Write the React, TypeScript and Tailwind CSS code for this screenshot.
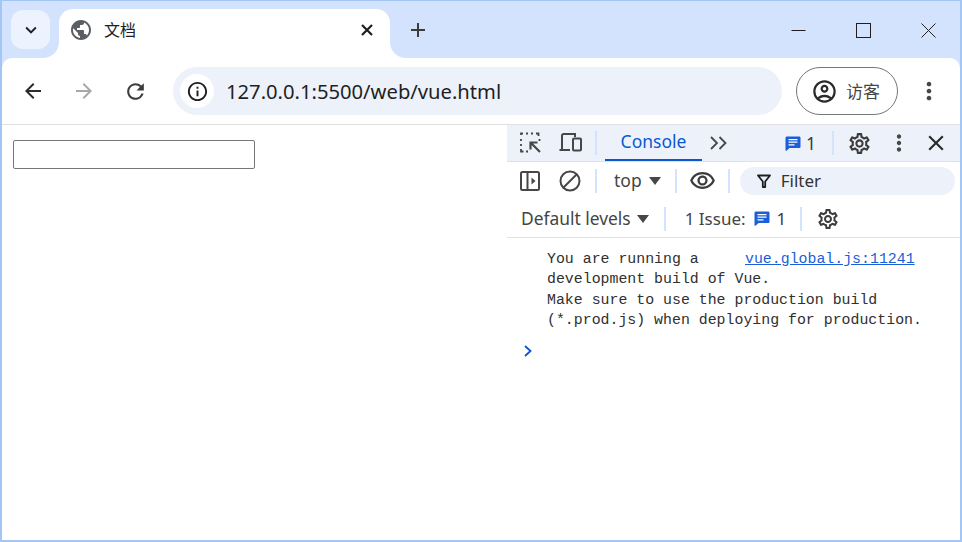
import React from "react";
import { MdArrowBack, MdArrowForward, MdRefresh, MdInfoOutline, MdOutlineAccountCircle, MdMoreVert, MdClose, MdAdd, MdKeyboardArrowDown, MdPublic, MdOutlineSettings, MdOutlineRemoveRedEye } from "react-icons/md";

const ui = "font-['Noto_Sans','Noto_Sans_CJK_SC',sans-serif]";

function Sep({ h = "h-[24px]" }: { h?: string }) {
  return <div className={`w-[2px] ${h} bg-[#d3e3fd] shrink-0`} />;
}

function Inspect() {
  return (
    <svg width="22" height="22" viewBox="0 0 22 22" fill="none" stroke="#474747" strokeWidth="2">
      <path d="M1 3V1.5H3M6 1.5h2M11 1.5h2M16 1.5h2.5V4M19.5 7v2M1 7v2M1 12v2M1 17v2.5H3.5M6 19.5h2" strokeWidth="1.8" />
      <path d="M20 20 L11 11 M10.5 17.5 V10.5 H17.5" strokeWidth="2.2" />
    </svg>
  );
}

function Device() {
  return (
    <svg width="24" height="22" viewBox="0 0 24 22" fill="none" stroke="#474747" strokeWidth="2">
      <path d="M3 17V3.5C3 2.7 3.7 2 4.5 2H16V5" />
      <path d="M0.5 18H11" />
      <rect x="14" y="6.5" width="8" height="12" rx="1" />
    </svg>
  );
}

function Dock() {
  return (
    <svg width="20" height="20" viewBox="0 0 20 20" fill="none" stroke="#474747" strokeWidth="2">
      <rect x="1" y="1" width="18" height="18" rx="1.5" />
      <path d="M7.5 1v18" />
      <path d="M11.5 6.5 L15.5 10 L11.5 13.5Z" fill="#474747" stroke="none" />
    </svg>
  );
}

function Block() {
  return (
    <svg width="22" height="22" viewBox="0 0 22 22" fill="none" stroke="#474747" strokeWidth="2">
      <circle cx="11" cy="11" r="9.5" />
      <path d="M4.5 17.5 L17.5 4.5" />
    </svg>
  );
}

function Funnel() {
  return (
    <svg width="14" height="14" viewBox="0 0 14 14" fill="none" stroke="#1f1f1f" strokeWidth="1.8">
      <path d="M1 1.5H13L8.2 7.5V13H5.8V7.5Z" strokeLinejoin="round" />
    </svg>
  );
}

function Caret() {
  return <span className="w-0 h-0 border-x-[6px] border-x-transparent border-t-[8px] border-t-[#474747]" />;
}

function Chevrons() {
  return (
    <svg width="18" height="14" viewBox="0 0 18 14" fill="none" stroke="#474747" strokeWidth="1.8">
      <path d="M1 1l6 6-6 6M9.5 1l6 6-6 6" />
    </svg>
  );
}

function Msg() {
  return (
    <svg width="16" height="15" viewBox="0 0 16 15" className="shrink-0">
      <path d="M2 0.5H14C15 0.5 15.5 1 15.5 2V10.5C15.5 11.5 15 12 14 12H4.5L1.5 14.8C1 15 0.5 14.8 0.5 14V2C0.5 1 1 0.5 2 0.5Z" fill="#1a5fd8" />
      <path d="M3.5 3.6H12.5M3.5 6.2H12.5M3.5 8.8H9.5" stroke="#fff" strokeWidth="1.3" />
    </svg>
  );
}

function TabClose() {
  return (
    <svg width="12" height="12" viewBox="0 0 12 12" fill="none" stroke="#1f1f1f" strokeWidth="2.2"><path d="M1 1L11 11M11 1L1 11" /></svg>
  );
}

export default function App() {
  return (
    <div className={`${ui} w-[962px] h-[542px] flex flex-col overflow-hidden bg-white border-t border-b-2 border-l-2 border-r-2 border-[#a3c6f5] text-[#1f1f1f]`}>
      {/* Tab strip */}
      <div className="h-[57px] shrink-0 bg-[#d3e3fd] flex items-start">
        <div className="ml-[9px] mt-[9px] w-[39px] h-[39px] rounded-[12px] bg-[#ecf2fe] flex items-center justify-center shrink-0">
          <MdKeyboardArrowDown size={22} color="#1f1f1f" />
        </div>
        <div className="relative ml-[9px] mt-[8px] w-[331px] h-[49px] bg-white rounded-t-[14px] flex items-center shrink-0 pb-[8px]">
          <svg className="absolute left-[-16px] bottom-0" width="16" height="16" viewBox="0 0 16 16"><path d="M16 0V16H0C9 16 16 9 16 0Z" fill="#fff" /></svg>
          <svg className="absolute right-[-16px] bottom-0" width="16" height="16" viewBox="0 0 16 16"><path d="M0 0V16H16C7 16 0 9 0 0Z" fill="#fff" /></svg>
          <div className="ml-[10px] w-[24px] flex justify-center"><MdPublic size={24} color="#5b5e63" /></div>
          <span className="ml-[11px] text-[16px] leading-none">文档</span>
          <span className="ml-auto mr-[17px] flex"><TabClose /></span>
        </div>
        <div className="ml-[16px] mt-[17px] shrink-0"><MdAdd size={24} color="#3c3c3c" /></div>
        <div className="ml-auto flex items-center mt-[22px] mr-[24px] gap-[50px]">
          <svg width="15" height="15" viewBox="0 0 15 15" fill="none" stroke="#1f1f1f" strokeWidth="1"><path d="M0.5 7.5H14.5" /></svg>
          <svg width="15" height="15" viewBox="0 0 15 15" fill="none" stroke="#1f1f1f" strokeWidth="1"><rect x="0.5" y="0.5" width="14" height="14" /></svg>
          <svg width="15" height="15" viewBox="0 0 15 15" fill="none" stroke="#1f1f1f" strokeWidth="1"><path d="M0.5 0.5L14.5 14.5M14.5 0.5L0.5 14.5" /></svg>
        </div>
      </div>

      {/* Toolbar */}
      <div className="h-[67px] shrink-0 bg-[#d3e3fd]">
        <div className="h-[67px] bg-white rounded-t-[10px] border-b border-[#e0e0e0] flex items-center">
          <div className="ml-[18px] w-[26px] flex justify-center"><MdArrowBack size={24} color="#2b2b2b" /></div>
          <div className="ml-[25px] w-[26px] flex justify-center"><MdArrowForward size={24} color="#a8a8a8" /></div>
          <div className="ml-[25px] w-[26px] flex justify-center"><MdRefresh size={25} color="#3c3c3c" /></div>
          <div className="ml-[25px] w-[609px] h-[48px] rounded-full bg-[#edf2fa] flex items-center pl-[7px] shrink-0">
            <div className="w-[34px] h-[34px] rounded-full bg-white flex items-center justify-center">
              <MdInfoOutline size={23} color="#1f1f1f" />
            </div>
            <span className="ml-[12px] text-[20.2px] leading-none text-[#1f1f1f]">127.0.0.1:5500/web/vue.html</span>
          </div>
          <div className="ml-[14px] w-[102px] h-[48px] rounded-full border border-[#747775] flex items-center pl-[14px] shrink-0">
            <MdOutlineAccountCircle size={27} color="#2b2b2b" />
            <span className="ml-[8px] text-[17px] leading-none text-[#444746]">访客</span>
          </div>
          <div className="ml-[17px]"><MdMoreVert size={28} color="#474747" /></div>
        </div>
      </div>

      {/* Body */}
      <div className="flex-1 flex min-h-0">
        <div className="w-[505px] shrink-0 pl-[11px] pt-[15px]">
          <input className="block w-[242px] h-[29px] border border-[#767676] rounded-[2px] bg-white" />
        </div>
        <div className="flex-1 flex flex-col min-w-0">
          {/* Row 1 */}
          <div className="h-[37px] bg-[#edf2fa] border-b border-[#d3e3fd] flex items-center shrink-0">
            <div className="ml-[13px] flex"><Inspect /></div>
            <div className="ml-[17px] flex"><Device /></div>
            <div className="ml-[12px]"><Sep /></div>
            <div className="ml-[8px] w-[97px] h-[36px] border-b-2 border-[#0b57d0] flex items-center justify-center text-[#0b57d0] text-[17.5px] leading-none">Console</div>
            <div className="ml-[8px] flex"><Chevrons /></div>
            <div className="ml-[57px] flex items-center gap-[5px] text-[17.5px] text-[#3c3c3c]"><Msg /><span>1</span></div>
            <div className="ml-[16px]"><Sep /></div>
            <div className="ml-[13px] flex"><MdOutlineSettings size={25} color="#3c3c3c" /></div>
            <div className="ml-[14px] flex"><MdMoreVert size={26} color="#474747" /></div>
            <div className="ml-[11px] flex"><MdClose size={26} color="#2b2b2b" /></div>
          </div>
          {/* Row 2 */}
          <div className="h-[38px] pb-[1px] flex items-center shrink-0">
            <div className="ml-[13px] flex"><Dock /></div>
            <div className="ml-[19px] flex"><Block /></div>
            <div className="ml-[14px]"><Sep /></div>
            <span className="ml-[17px] text-[17.5px] leading-none text-[#444]">top</span>
            <span className="ml-[7px] flex"><Caret /></span>
            <div className="ml-[14px]"><Sep /></div>
            <div className="ml-[12px] flex"><MdOutlineRemoveRedEye size={27} color="#3c3c3c" /></div>
            <div className="ml-[12px]"><Sep /></div>
            <div className="ml-[10px] w-[215px] h-[28px] rounded-full bg-[#edf2fa] flex items-center pl-[17px]">
              <Funnel />
              <span className="ml-[10px] text-[17px] leading-none text-[#333]">Filter</span>
            </div>
          </div>
          {/* Row 3 */}
          <div className="h-[38px] border-b border-[#d3e3fd] flex items-center shrink-0">
            <span className="ml-[14px] text-[17.4px] leading-none text-[#444]">Default levels</span>
            <span className="ml-[6px] flex"><Caret /></span>
            <div className="ml-[15px]"><Sep /></div>
            <span className="ml-[19px] text-[17px] leading-none text-[#444]">1 Issue:</span>
            <div className="ml-[8px] flex items-center gap-[7px] text-[17px] text-[#3c3c3c]"><Msg /><span>1</span></div>
            <div className="ml-[14px]"><Sep /></div>
            <div className="ml-[14px] flex"><MdOutlineSettings size={24} color="#3c3c3c" /></div>
          </div>
          {/* Console */}
          <div className="relative pt-[11px] pl-[40px] font-['Liberation_Mono','Noto_Sans_CJK_SC',monospace] text-[14.88px] leading-[20.4px] text-[#303030] whitespace-pre">
            <div className="relative">
              You are running a
              <span className="absolute left-[198px] top-0 text-[#1a5fd8] underline">vue.global.js:11241</span>
            </div>
            <div>development build of Vue.</div>
            <div>Make sure to use the production build</div>
            <div>(*.prod.js) when deploying for production.</div>
            <div className="mt-[10px] -ml-[23px] h-[20px] flex items-center">
              <svg width="8" height="12" viewBox="0 0 8 12" fill="none" stroke="#0b57d0" strokeWidth="1.8"><path d="M1 1l5.5 5L1 11" /></svg>
            </div>
          </div>
        </div>
      </div>
    </div>
  );
}
